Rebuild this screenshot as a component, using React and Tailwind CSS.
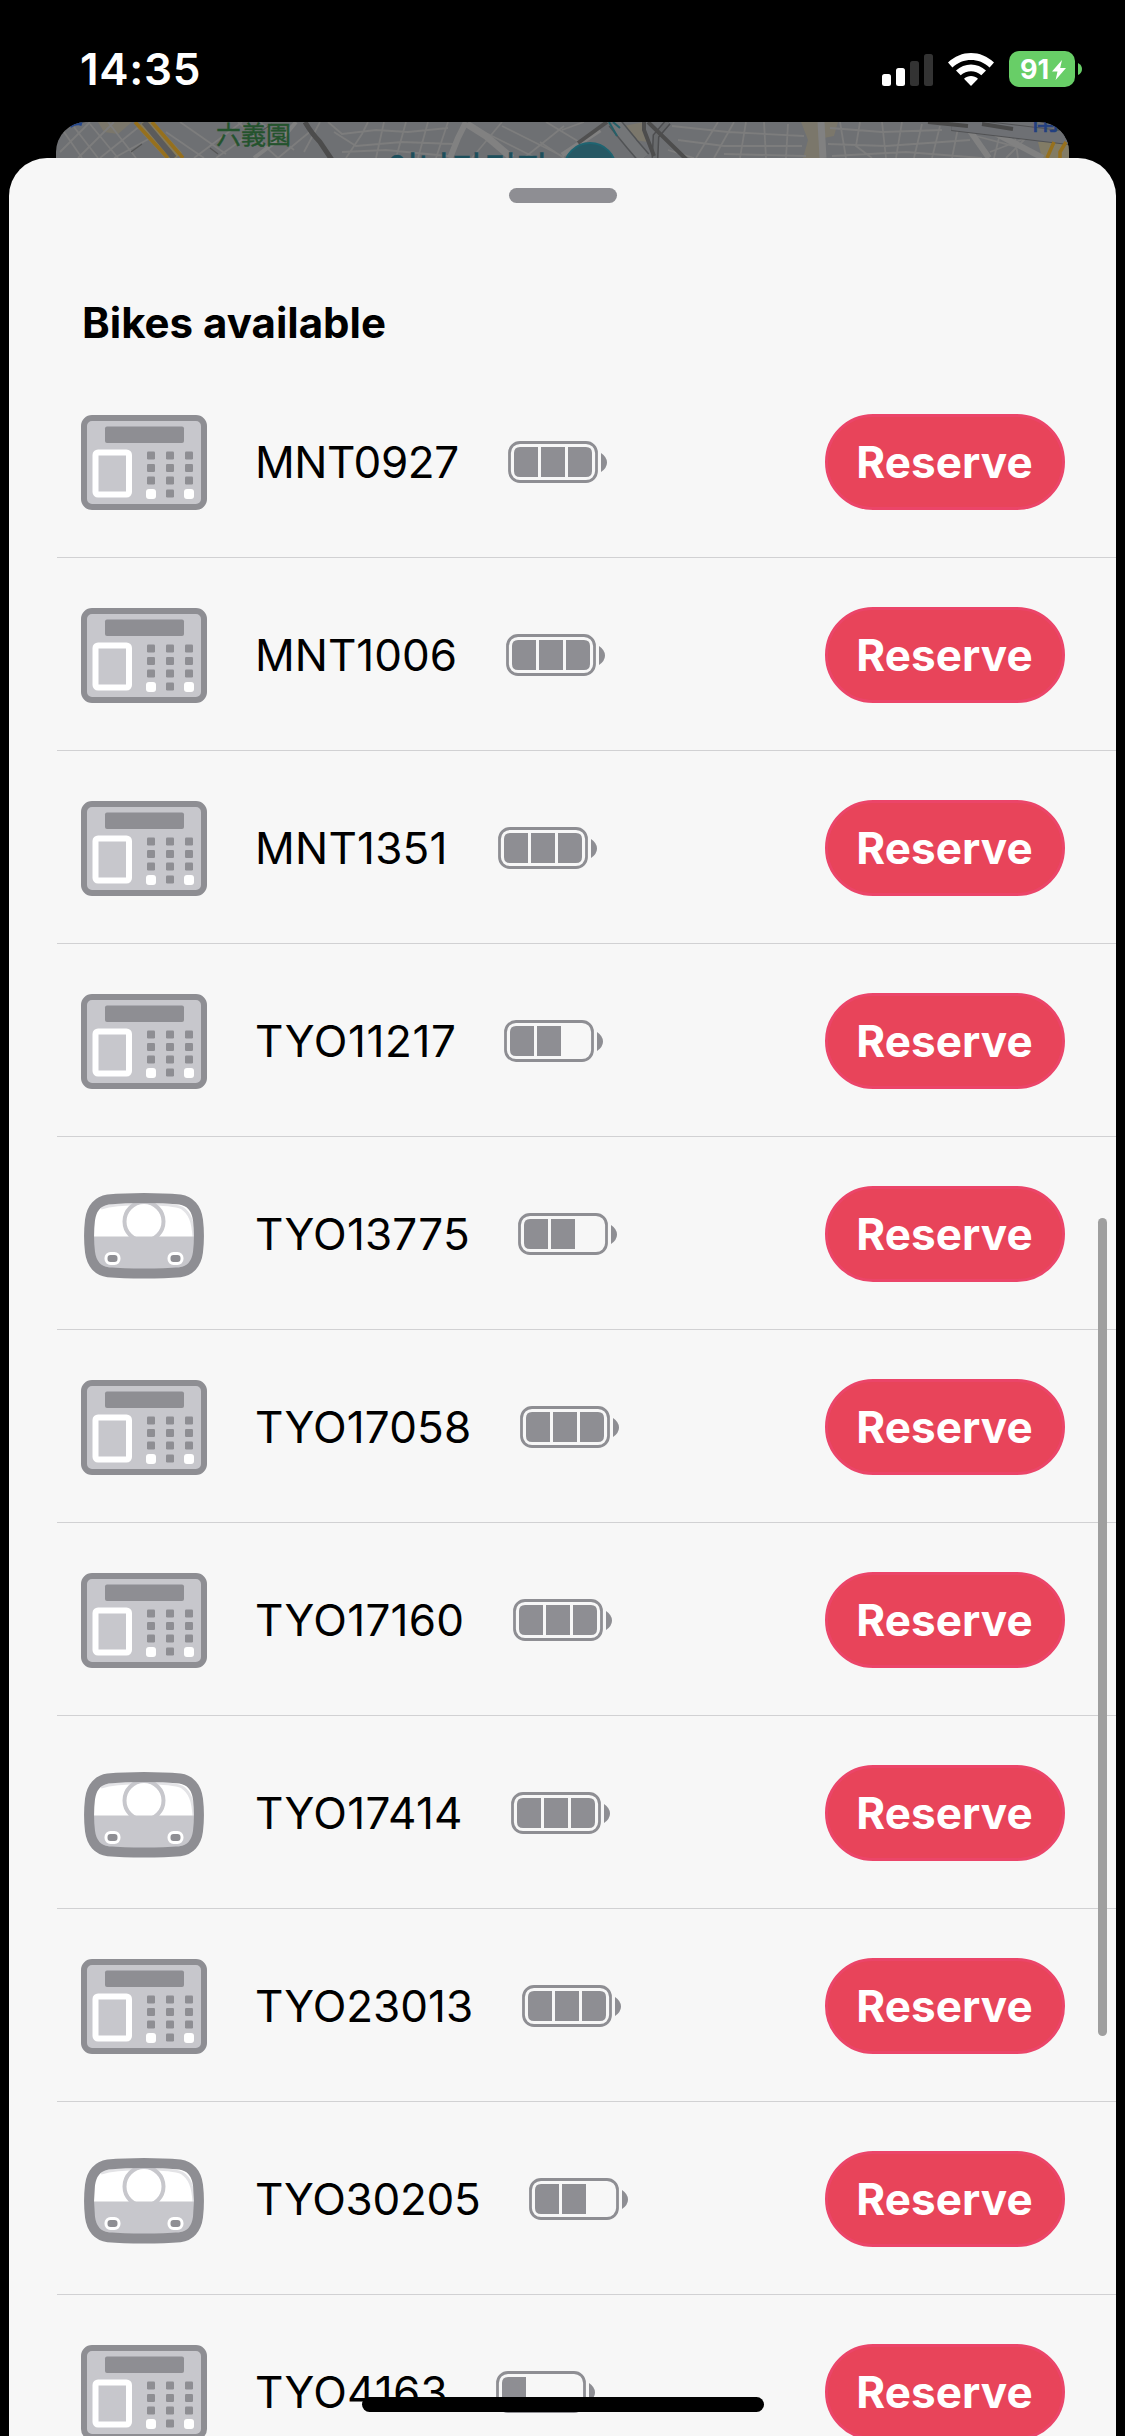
import React from 'react';

// labelWidth is the space the bike code takes up before the battery icon
const bikes = [
    { id: 'MNT0927', type: 'panel', battery: 3, labelWidth: 253, tracking: -0.4 },
    { id: 'MNT1006', type: 'panel', battery: 3, labelWidth: 251, tracking: 0 },
    { id: 'MNT1351', type: 'panel', battery: 3, labelWidth: 243, tracking: 0.25 },
    { id: 'TYO11217', type: 'panel', battery: 2, labelWidth: 249, tracking: 0.6 },
    { id: 'TYO13775', type: 'round', battery: 2, labelWidth: 263, tracking: 0.2 },
    { id: 'TYO17058', type: 'panel', battery: 3, labelWidth: 265, tracking: 0.15 },
    { id: 'TYO17160', type: 'panel', battery: 3, labelWidth: 258, tracking: 0.3 },
    { id: 'TYO17414', type: 'round', battery: 3, labelWidth: 256, tracking: 0.3 },
    { id: 'TYO23013', type: 'panel', battery: 3, labelWidth: 267, tracking: 0 },
    { id: 'TYO30205', type: 'round', battery: 2, labelWidth: 274, tracking: -0.25 },
    { id: 'TYO4163', type: 'panel', battery: 1, labelWidth: 241, tracking: 0.25 },
];

const PanelIcon = () => (
    <svg width="126" height="95" viewBox="0 0 126 95" className="shrink-0">
        <rect x="3" y="3" width="120" height="89" rx="8" fill="#c7c7cc" stroke="#8e8e93" strokeWidth="6" />
        <rect x="24" y="11.5" width="79" height="16.5" rx="2" fill="#8e8e93" />
        <rect x="14.5" y="37.5" width="33.5" height="42" rx="2.5" fill="none" stroke="#fff" strokeWidth="6" />
        {[36.5, 49, 61.5, 74.5].map((y, row) =>
            [66, 85, 104].map((x, col) =>
                row === 3 && col !== 1 ? (
                    <rect key={x} x={x - 1} y={y - 0.5} width="10" height="10" rx="3" fill="#fff" />
                ) : (
                    <rect key={x} x={x} y={y} width="8" height="8" rx="1.2" fill="#8e8e93" />
                )
            )
        )}
    </svg>
);

const RoundIcon = () => {
    const shell =
        'M63 11C76 11 88 11.5 99 12.5C109 14 115.5 21 117 33C118.3 44 118.3 54 117 65C115.5 77 109 84 99 85.2C88 86.2 76 86.5 63 86.5C50 86.5 38 86.2 27 85.2C17 84 10.5 77 9 65C7.7 54 7.7 44 9 33C10.5 21 17 14 27 12.5C38 11.5 50 11 63 11Z';
    return (
        <svg width="126" height="95" viewBox="0 0 126 95" className="shrink-0">
            <defs>
                <clipPath id="round-shell">
                    <path d={shell} />
                </clipPath>
            </defs>
            <g clipPath="url(#round-shell)">
                <rect width="126" height="50" fill="#fff" />
                <path d="M20 21C40 15 90 16 101 21C109 26 112 35 113 50" fill="none" stroke="#e3e3e6" strokeWidth="3" />
                <circle cx="63" cy="34.5" r="19.5" fill="#fff" stroke="#c7c7cc" strokeWidth="4" />
                <rect y="49.5" width="126" height="46" fill="#c7c7cc" />
            </g>
            <path d={shell} fill="none" stroke="#8e8e93" strokeWidth="10" />
            <rect x="25" y="66.5" width="13" height="10" rx="4.5" fill="#8e8e93" stroke="#fff" strokeWidth="3" />
            <rect x="88" y="66.5" width="13" height="10" rx="4.5" fill="#8e8e93" stroke="#fff" strokeWidth="3" />
        </svg>
    );
};

const BatteryLevel = ({ level }) => (
    <svg width="99" height="42" viewBox="0 0 99 42" className="shrink-0">
        <rect x="1.5" y="1.5" width="87" height="39" rx="10.5" fill="none" stroke="#8e8e93" strokeWidth="2.8" />
        <path d="M12 6H30V36H12Q6 36 6 30V12Q6 6 12 6Z" fill="#8e8e93" />
        {level > 1 && <rect x="33" y="6" width="24" height="30" fill="#8e8e93" />}
        {level > 2 && <path d="M60 6H78Q84 6 84 12V30Q84 36 78 36H60Z" fill="#8e8e93" />}
        <path d="M93 12Q99 16 99 21.5Q99 27 93 31Z" fill="#8e8e93" />
    </svg>
);

const StatusBar = () => (
    <div className="flex h-[122px] items-start justify-between pr-[43px] pl-20 text-white">
        <span className="mt-[42px] text-[44px] leading-[54px] font-semibold tracking-[0.7px]">14:35</span>
        <div className="mt-[51px] flex h-9 items-center">
            <svg width="51" height="33" viewBox="0 0 51 33" className="mr-[15px]">
                <rect y="21" width="9" height="12" rx="2.5" fill="#fff" />
                <rect x="14" y="15" width="9" height="18" rx="2.5" fill="#fff" />
                <rect x="28" y="8" width="9" height="25" rx="2.5" fill="#333" />
                <rect x="42" y="1" width="9" height="32" rx="2.5" fill="#333" />
            </svg>
            <svg width="46" height="33" viewBox="0 0 46 33" className="mr-[15px]">
                <path d="M0 9.6C13-3.2 33-3.2 46 9.6L41.6 14.4C31 4.5 15 4.5 4.4 14.4Z" fill="#fff" />
                <path d="M8 17.6C16.5 9.6 29.5 9.6 38 17.6L33.3 22.3C27.5 17 18.5 17 12.7 22.3Z" fill="#fff" />
                <path d="M16 25.7C20 22.2 26 22.2 30 25.7L23 33Z" fill="#fff" />
            </svg>
            <div className="flex h-9 w-[66px] items-center justify-center gap-[3px] rounded-[10px] bg-[#68ce67] pt-px pl-0.5">
                <span className="text-[27px] leading-9 font-bold">91</span>
                <svg width="14" height="20" viewBox="0 0 14 20">
                    <path d="M10 0L0 11.5H5.5L3.6 20L14 8H8.2Z" fill="#fff" />
                </svg>
            </div>
            <svg width="4" height="12" viewBox="0 0 4 12" className="ml-[3px]">
                <path d="M0 0Q4 2 4 6T0 12Z" fill="#68ce67" />
            </svg>
        </div>
    </div>
);

// Strip of the dimmed map that peeks out above the sheet
const MapStrip = () => (
    <svg width="1013" height="60" viewBox="0 0 1013 60" className="block rounded-t-[30px] bg-[#6e7073]">
        <path d="M42 0H76L62 12L48 10ZM745 0H782L778 14L768 16L766 36H747L752 18ZM568 4L588 0L592 20L578 18Z" fill="#7b776b" />
        <path d="M982 20L1013 18V36H986Z" fill="#827c66" />
        {/* side streets */}
        <g fill="none" stroke="#7d7d7d" strokeWidth="1.8">
            <path d="M8 10L26 36M18 5L42 36M34 2L62 36M52 0L80 36M4 30L34 0M22 36L58 0M44 36L84 4M58 36L98 14" />
            <path d="M110 10L148 36M124 0L170 32M138 36L186 0M160 36L206 4M182 0L222 36M204 0L238 28M222 36L256 8M264 0L248 30" />
            <path d="M272 0L286 12L320 8L352 10L392 6M278 10L300 24L346 20L398 22M290 36L306 12L312 0M320 36L328 0M340 36L350 0M362 36L372 0M380 36L392 0M286 30L330 28L392 34" />
            <path d="M416 36L446 0M432 12L480 36M446 4L506 34M468 36L508 4M490 0L540 30M506 8L528 0M484 20L508 36" />
            <path d="M616 4L672 10L748 14M622 18L668 24L746 24M640 36L662 0M658 36L678 0M684 36L690 0M710 36L708 0M730 36L732 2M668 32L750 34M612 28L638 36" />
            <path d="M774 6L826 10L886 8M772 22L830 24L914 18M784 0L790 36M804 0L800 24L816 36M826 0L830 36M846 0L840 36M866 2L858 36M884 4L876 36M902 6L896 36M776 34L850 30L926 36" />
            <path d="M920 14L980 30M946 4L938 36M958 8L962 36M972 14L950 36M934 30L970 16" />
        </g>
        {/* larger roads */}
        <g fill="none" stroke="#818181">
            <path d="M410 0L402 16L394 36" strokeWidth="6" />
            <path d="M411 2L430 14L456 36" strokeWidth="7" />
            <path d="M765 0L767 36" strokeWidth="7" />
            <path d="M912 6L933 36M937 10L987 36" strokeWidth="6" />
            <path d="M198 36L230 12L240 0" strokeWidth="4" />
            <path d="M506 33L544 8" strokeWidth="5" />
        </g>
        <path d="M87 0L120 36" stroke="#857b5c" strokeWidth="16" />
        <path d="M79 0L112 36M96 0L127 36" stroke="#96701d" strokeWidth="3.5" />
        <path d="M88 0L118 36" stroke="#5b5b5b" strokeWidth="6" />
        <path d="M249 0Q256 12 264 20L276 38" fill="none" stroke="#4c4c4c" strokeWidth="5" />
        {/* railway lines */}
        <path d="M558 0L576 22L588 36" fill="none" stroke="#515355" strokeWidth="14" />
        <path d="M558 0L576 22L588 36" fill="none" stroke="#747678" strokeWidth="11" />
        <path d="M553 0L561 14M557 0L564 6" stroke="#255f68" strokeWidth="2" />
        <path d="M551 0L522 21" stroke="#505050" strokeWidth="4" />
        <path d="M612 0L600 14L599 36" fill="none" stroke="#4d4e50" strokeWidth="7" />
        <path d="M612 0L600 14L599 36" fill="none" stroke="#686a6c" strokeWidth="4" />
        <path d="M588 0V8L598 34M592 0L631 38" fill="none" stroke="#4d4d4d" strokeWidth="4" />
        <path d="M896 2L1013 16" stroke="#515254" strokeWidth="14" />
        <path d="M896 2L1013 16" stroke="#6e7074" strokeWidth="12" />
        <path d="M872 0L912 4M926 2L957 7" stroke="#4a4a4a" strokeWidth="4" />
        <path d="M998 20L991 36M1010 20L1004 30V36" fill="none" stroke="#96701d" strokeWidth="3.5" />
        <path d="M75 30L86 22M204 10L216 2M154 26L162 32" stroke="#555" strokeWidth="1.2" />
        <path d="M14 4Q20 0 26 2" stroke="#24478c" strokeWidth="4" fill="none" />
        <circle cx="534" cy="47" r="26" fill="#275864" stroke="#1f6471" strokeWidth="2" />
        <text x="160" y="22" fontSize="25" fill="#24532d" stroke="#24532d" strokeWidth="0.4" className="font-['Noto_Sans_CJK_JP',sans-serif]">
            六義園
        </text>
        <text x="330" y="60" fontSize="35.5" fill="#1d4f5c" stroke="#1d4f5c" strokeWidth="0.5" className="font-['Noto_Sans_CJK_KR',sans-serif]">
            이나가리자
        </text>
        <text x="975" y="8" fontSize="29" fill="#223f80" stroke="#223f80" strokeWidth="0.6" className="font-['Noto_Sans_CJK_JP',sans-serif]">
            南
        </text>
    </svg>
);

const BikeRow = ({ bike }) => (
    <li className="flex h-[193px] items-center border-b border-[#d1d1d3] pt-0.5 pr-[51px] pl-6">
        {bike.type === 'panel' ? <PanelIcon /> : <RoundIcon />}
        <span
            className="ml-12 shrink-0 text-[44px] leading-[54px] whitespace-nowrap"
            style={{ width: bike.labelWidth, letterSpacing: bike.tracking }}
        >
            {bike.id}
        </span>
        <BatteryLevel level={bike.battery} />
        <button className="ml-auto h-24 w-60 rounded-full border-[3px] border-[#eb4569] bg-[#e8445a] pr-px text-[44px] leading-[54px] font-bold tracking-[0.1px] text-white">
            Reserve
        </button>
    </li>
);

const App = () => {
    return (
        <div className="relative h-[2436px] w-[1125px] overflow-hidden bg-black font-['Inter',sans-serif]">
            <StatusBar />
            <div className="mx-14 h-9">
                <MapStrip />
            </div>

            <div className="relative mx-[9px] h-[2278px] overflow-hidden rounded-t-[38px] bg-[#f7f7f7] text-black">
                <div className="flex h-[207px] flex-col pt-[30px]">
                    <div className="h-[15px] w-[108px] self-center rounded-full bg-[#8e8e93]" />
                    <h1 className="mt-[93px] ml-[73px] text-[42px] leading-[54px] font-bold">Bikes available</h1>
                </div>
                <ul className="ml-12">
                    {bikes.map((bike) => (
                        <BikeRow key={bike.id} bike={bike} />
                    ))}
                </ul>
                {/* Scroll indicator */}
                <div className="absolute top-[1060px] right-[9px] h-[818px] w-[9px] rounded-full bg-[#9f9f9f]" />
            </div>

            {/* Home indicator */}
            <div className="absolute bottom-6 left-[362px] h-[15px] w-[402px] rounded-full bg-black" />
        </div>
    );
};

export default App;
